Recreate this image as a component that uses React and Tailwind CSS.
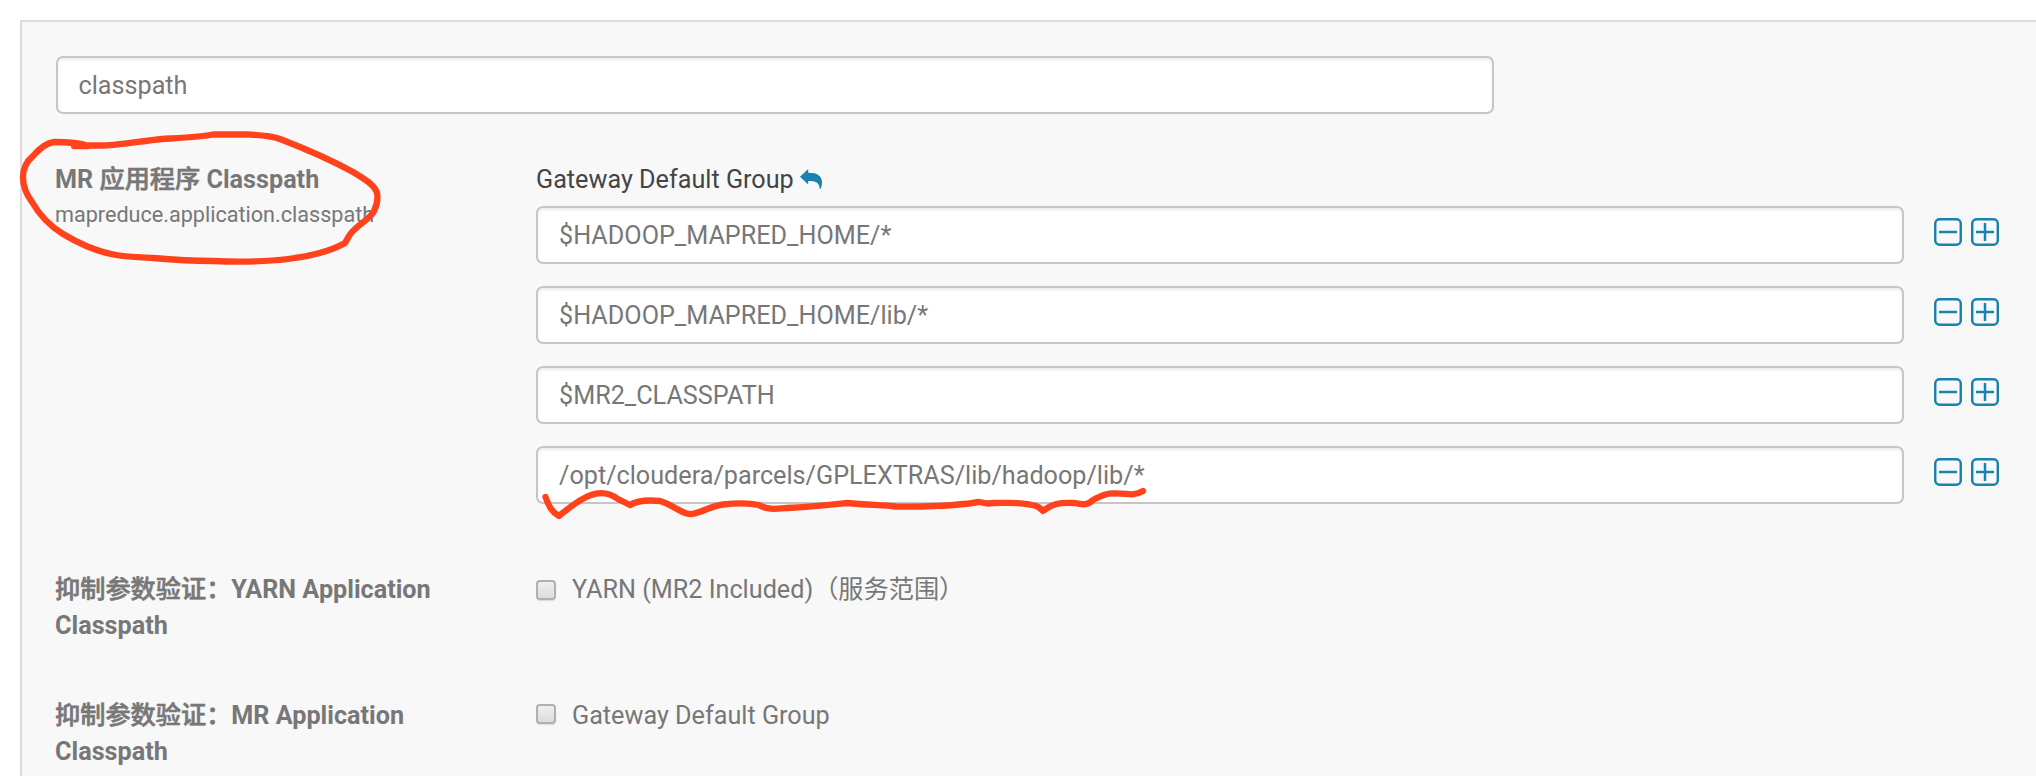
import React from "react";

const paths = [
  "$HADOOP_MAPRED_HOME/*",
  "$HADOOP_MAPRED_HOME/lib/*",
  "$MR2_CLASSPATH",
  "/opt/cloudera/parcels/GPLEXTRAS/lib/hadoop/lib/*",
];

function Field({ value, className }) {
  return (
    <div
      className={
        "flex h-[58px] items-center rounded-[7px] border-2 border-[#c6c6c6] bg-white pt-[2px] shadow-[inset_0_2px_3px_rgba(0,0,0,0.08)] " +
        className
      }
    >
      <span>{value}</span>
    </div>
  );
}

function BoxIcon({ plus }) {
  return (
    <svg viewBox="0 0 28 28" className="size-7" fill="none" stroke="#1a82ae" strokeWidth="2.5">
      <rect x="1.2" y="1.2" width="25.600" height="25.600" rx="4.5" />
      <path d="M5 14h18" />
      {plus && <path d="M14 5v18" />}
    </svg>
  );
}

function Checkbox({ className }) {
  return (
    <span
      className={
        "size-5 shrink-0 rounded-[4px] border-2 border-[#b0b0b0] bg-linear-to-b from-[#efefef] to-[#dcdcdc] shadow-[0_1px_1px_rgba(0,0,0,0.12)] " +
        className
      }
    />
  );
}

function SuppressRow({ cjk, label, option, boxClass }) {
  return (
    <div className="flex h-[126px] leading-9">
      <div className="-ml-px mr-px w-[480px] shrink-0 pt-px font-bold">
        <div className="flex">
          <span className="font-medium [-webkit-text-stroke:0.6px_#777777]">{cjk}</span>
          <span>{label}</span>
        </div>
        <div>Classpath</div>
      </div>
      <div className="flex">
        <Checkbox className={boxClass} />
        <span className="ml-4 mt-px">{option}</span>
      </div>
    </div>
  );
}

export default function App() {
  return (
    <div className="h-[776px] w-[2036px] overflow-hidden bg-white pl-5 pt-5 font-['Roboto','Noto_Sans_CJK_SC',sans-serif] text-[25.2px] text-[#777777]">
      <div className="relative h-[756px] border-l-2 border-t-2 border-[#dcdcdc] bg-[#f8f8f8] pl-[34px] pt-[34px]">
        <Field value="classpath" className="w-[1438px] pl-[20.5px]" />
        <div className="mt-[47px] flex h-[410px]">
          <div className="-ml-px mr-px w-[480px] shrink-0">
            <div className="h-9 pt-px font-bold leading-9">
              MR <span className="font-medium [-webkit-text-stroke:0.6px_#777777]">应用程序</span> Classpath
            </div>
            <div className="text-[21.6px] leading-9">mapreduce.application.classpath</div>
          </div>
          <div>
            <div className="flex h-[45px] text-[#444444] leading-9">
              <span className="mt-px">Gateway Default Group</span>
              <svg viewBox="0 0 22 20" className="ml-[6px] mt-[8px] h-5 w-[22px]" fill="#1a82ae">
                <path d="M8.200 0v3.800C17.500 3.800 22 7 22 13.500c0 2.200-.5 4.200-1.300 6.200h-1.100C19.500 13.500 15.500 12 8.200 12v3.600L0 7.800z" />
              </svg>
            </div>
            <div className="flex flex-col gap-[22px]">
              {paths.map((p) => (
                <div key={p} className="flex">
                  <Field value={p} className="w-[1368px] pl-[21px]" />
                  <div className="ml-[30px] mt-3 flex gap-[9px]">
                    <BoxIcon />
                    <BoxIcon plus />
                  </div>
                </div>
              ))}
            </div>
          </div>
        </div>
        <SuppressRow cjk="抑制参数验证：" label="YARN Application" option="YARN (MR2 Included)（服务范围）" boxClass="mt-[9px]" />
        <SuppressRow cjk="抑制参数验证：" label="MR Application" option="Gateway Default Group" boxClass="mt-[7px]" />
        <svg
          className="pointer-events-none absolute -left-[22px] -top-[22px] h-[776px] w-[1200px]"
          viewBox="0 0 1200 776"
          fill="none"
          stroke="#ff421c"
          strokeWidth="6.3"
          strokeLinecap="round"
          strokeLinejoin="round"
        >
          <path d="M74 146H88C80 143 70 142 54 142C46 143 39 149 33 156C26 162 23 169 23 177C23 187 26 194 32 202C40 216 50 226 63 234C78 243 97 251 111 254C122 257 138 257 153 258C175 260 195 261 213 261C240 262 265 262 288 259C312 256 331 251 345 243C348 238 350 233 354 230C363 221 371 218 374 211C378 203 378 198 377 193C375 186 368 181 353 172C333 161 306 149 280 139C269 135 258 135 247 134.500H213C202 137 178 138 162 139C142 141 120 145 104 145.500H74" />
          <path d="M545.500 497C549 507 552 512 559 516C569 508 579 499 591 495C602 491 611 494 618 499L630 505C638 500 650 500 660 501C674 505 682 515 692 514C703 512 711 506 723 504.500C736 503 750 503 759 505C767 510 775 509 787 508C810 507 828 505 847 503C869 505 883 505 896 506.500C923 507 945 506 963 504C970 504 975 502 979 502L987 503.500L994 503C1008 503 1020 502 1032 505C1038 506 1040 508 1043 511C1052 504 1059 502 1075 503C1083 505 1088 505 1093 500C1101 496 1107 493 1114 493.500C1128 493 1132 497 1143 491" />
        </svg>
      </div>
    </div>
  );
}
